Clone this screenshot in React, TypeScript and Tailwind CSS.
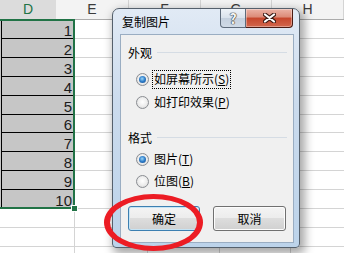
import React from "react";

const rowHeights = [19, 19, 19, 19, 19, 18, 19, 19, 19, 19];
const columns = [
  { name: "E", w: "w-[73px]" },
  { name: "F", w: "w-[72px]" },
  { name: "G", w: "w-[71px]" },
  { name: "H", w: "w-[72px]" },
];

const Radio = ({ checked }: { checked?: boolean }) => (
  <span className="flex h-[13px] w-[13px] shrink-0 items-center justify-center rounded-full border border-[#8a8d92] bg-[radial-gradient(circle_at_50%_45%,#ffffff_0%,#ececec_55%,#cdcdcd_100%)]">
    {checked && (
      <span className="h-[7px] w-[7px] rounded-full bg-[radial-gradient(circle_at_45%_40%,#9ad6f8_0%,#2c7bc8_50%,#164a86_100%)]" />
    )}
  </span>
);

const Option = ({
  label,
  hotkey,
  checked,
  focused,
}: {
  label: string;
  hotkey: string;
  checked?: boolean;
  focused?: boolean;
}) => (
  <div className="flex h-[20px] items-center pl-[15px]">
    <Radio checked={checked} />
    <span
      className={`ml-[3px] flex h-[19px] items-center px-px ${
        focused ? "border border-dotted border-black" : "border border-transparent"
      }`}
    >
      {label}(<span className="underline">{hotkey}</span>)
    </span>
  </div>
);

const Section = ({ title }: { title: string }) => (
  <div className="flex h-[14px] items-center pl-[7px] pr-[6px]">
    <span>{title}</span>
    <span className="ml-[5px] h-[2px] flex-1 border-t border-[#d5dce4] border-b-white" />
  </div>
);

export default function App() {
  return (
    <div className="relative h-[253px] w-[344px] overflow-hidden bg-white font-['Liberation_Sans',sans-serif]">
      {/* column headers */}
      <div className="flex h-[20px] border-b border-[#ababab] bg-[#f3f3f3]">
        <div className="flex w-[75px] items-center justify-center bg-[#dcdcdc] text-[14px] text-[#217346]">D</div>
        {columns.map((c) => (
          <div key={c.name} className={`flex ${c.w} shrink-0 items-center justify-center border-r border-[#d4d4d4] text-[14px] text-[#3b3b3b]`}>
            {c.name}
          </div>
        ))}
      </div>

      {/* data rows */}
      {rowHeights.map((h, i) => (
        <div key={i} className="flex" style={{ height: h }}>
          <div className="flex w-[75px] shrink-0 bg-[#c6c6c6]">
            <div className="flex flex-1 items-end justify-end border-b border-l border-black pr-[3px] text-[15px] leading-none text-[#1c1c1c] ml-px">
              {i + 1}
            </div>
          </div>
          {columns.map((c) => (
            <div key={c.name} className={`${c.w} shrink-0 border-b border-r border-[#d4d4d4]`} />
          ))}
        </div>
      ))}

      {/* empty rows */}
      {[0, 1, 2].map((i) => (
        <div key={i} className="flex h-[19px]">
          <div className="w-[75px] shrink-0 border-b border-r border-[#d4d4d4]" />
          {columns.map((c) => (
            <div key={c.name} className={`${c.w} shrink-0 border-b border-r border-[#d4d4d4]`} />
          ))}
        </div>
      ))}

      {/* selection */}
      <div className="absolute left-[-2px] top-[19px] h-[190px] w-[77px] border-2 border-[#217346]" />
      <div className="absolute left-[71px] top-[205px] h-[7px] w-[7px] border border-white bg-[#217346]" />

      {/* dialog */}
      <div className="absolute left-[112px] top-[8px] flex h-[240px] w-[188px] flex-col rounded-t-[7px] rounded-b-[4px] border border-[#55606c] bg-[linear-gradient(#e1eaf5,#cbdbed_40%,#bcd3ea)] shadow-[3px_4px_10px_2px_rgba(0,0,0,0.35)] font-['Noto_Sans_CJK_SC',sans-serif] text-[12px] text-black">
        <div className="relative flex h-[25px] shrink-0 items-center pl-[9px]">
          <span>复制图片</span>
          <div className="absolute right-[6px] top-0 flex h-[19px]">
            <div className="flex w-[26px] items-center justify-center rounded-bl-[4px] border border-t-0 border-[#5e6b7b] bg-[linear-gradient(#eef3f8,#d9e2ec_50%,#c4d0de_50%,#d0dae6)] text-[14px] font-bold leading-none text-[#f4f4f4] [text-shadow:0_0_1px_#2d2d2d,0_0_1px_#2d2d2d,0_0_1px_#2d2d2d]">
              ?
            </div>
            <div className="flex w-[47px] items-center justify-center rounded-br-[4px] border border-l-0 border-t-0 border-[#4a1b13] bg-[linear-gradient(#ebb3a6,#dc8a77_45%,#c6462c_50%,#d2674d)] shadow-[inset_0_0_0_1px_rgba(255,255,255,0.35)]">
              <svg width="13" height="10" viewBox="0 0 13 10">
                <path d="M2 1.5 L11 8.5 M11 1.5 L2 8.5" stroke="#3b1a14" strokeWidth="4.2" strokeLinecap="round" />
                <path d="M2 1.5 L11 8.5 M11 1.5 L2 8.5" stroke="#ffffff" strokeWidth="2.2" strokeLinecap="round" />
              </svg>
            </div>
          </div>
        </div>

        <div className="ml-[7px] h-[209px] w-[174px] border border-[#9aadc2] bg-[#f0f0f0]">
          <div className="mt-[11px]">
            <Section title="外观" />
          </div>
          <div className="mt-[9px]">
            <Option label="如屏幕所示" hotkey="S" checked focused />
          </div>
          <div className="mt-[3px]">
            <Option label="如打印效果" hotkey="P" />
          </div>
          <div className="mt-[19px]">
            <Section title="格式" />
          </div>
          <div className="mt-[4px]">
            <Option label="图片" hotkey="T" checked />
          </div>
          <div className="mt-[2px]">
            <Option label="位图" hotkey="B" />
          </div>
          <div className="mt-[15px] flex gap-[13px] pl-[7px]">
            <button className="flex h-[25px] w-[72px] items-center justify-center rounded-[3px] border border-[#3c7fb1] bg-[linear-gradient(#f4f4f4,#ececec_50%,#dddddd_50%,#d0d0d0)] shadow-[inset_0_0_0_1px_#c6e4f5]">
              确定
            </button>
            <button className="flex h-[25px] w-[73px] items-center justify-center rounded-[3px] border border-[#707070] bg-[linear-gradient(#f4f4f4,#ececec_50%,#dddddd_50%,#d0d0d0)] shadow-[inset_0_0_0_1px_#fcfcfc]">
              取消
            </button>
          </div>
        </div>
      </div>

      {/* red ellipse */}
      <div className="absolute left-[104px] top-[194px] h-[57px] w-[99px] rounded-[50%] border-[5px] border-x-[6px] border-[#ec1c24]" />
    </div>
  );
}
